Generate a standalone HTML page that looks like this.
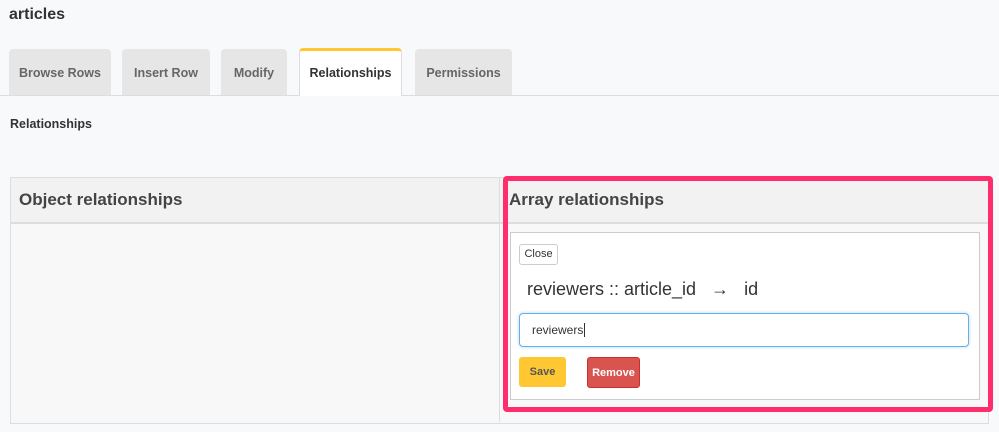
<!DOCTYPE html>
<html><head><style>
body{margin:0;width:999px;height:432px;background:#f8f9fb;font-family:"Liberation Sans",sans-serif;position:relative;overflow:hidden;color:#444}
.a{position:absolute}
.tab{position:absolute;top:49px;height:46px;background:#e6e6e6;border-radius:4px 4px 0 0;font-size:12.5px;font-weight:bold;color:#666;text-align:center;line-height:48px}
</style></head><body>
<div class="a" style="left:9px;top:6px;font-size:16px;font-weight:bold;color:#333">articles</div>
<div class="a" style="left:0;top:95px;width:999px;height:1px;background:#ddd"></div>
<div class="tab" style="left:9px;width:102px">Browse Rows</div>
<div class="tab" style="left:122px;width:88px">Insert Row</div>
<div class="tab" style="left:221px;width:66px">Modify</div>
<div class="tab" style="left:299px;width:103px;height:46px;background:#fff;border:1px solid #ddd;border-bottom:none;border-top:3px solid #ffc832;top:48px;color:#333;line-height:44px;box-sizing:border-box;height:48px">Relationships</div>
<div class="tab" style="left:415px;width:97px">Permissions</div>
<div class="a" style="left:10px;top:117px;font-size:12.5px;font-weight:bold;color:#333">Relationships</div>
<div class="a" style="left:10px;top:177px;width:977px;height:245px;border:1px solid #ddd;background:#f8f8f8"></div>
<div class="a" style="left:11px;top:178px;width:977px;height:44px;background:#f2f2f2;border-bottom:2px solid #ddd"></div>
<div class="a" style="left:499px;top:178px;width:1px;height:244px;background:#ddd"></div>
<div class="a" style="left:19px;top:190px;font-size:17px;font-weight:bold;color:#444">Object relationships</div>
<div class="a" style="left:509px;top:190px;font-size:17px;font-weight:bold;color:#444">Array relationships</div>
<div class="a" style="left:510px;top:232px;width:468px;height:166px;background:#fff;border:1px solid #ccc"></div>
<div class="a" style="left:519px;top:244px;width:37px;height:19px;border:1px solid #ccc;border-radius:3px;background:#fff;font-size:11px;line-height:19px;text-align:center;color:#333">Close</div>
<div class="a" style="left:527px;top:279px;font-size:18px;color:#333;word-spacing:0">reviewers :: article_id &nbsp;&nbsp;→ &nbsp;&nbsp;id</div>
<div class="a" style="left:519px;top:313px;width:448px;height:32px;border:1px solid #66afe9;border-radius:4px;background:#fff;box-shadow:0 0 3px rgba(102,175,233,.5)"><span style="position:absolute;left:12px;top:9px;font-size:12px;color:#333">reviewers<span style="border-left:1px solid #333;margin-left:1px"></span></span></div>
<div class="a" style="left:519px;top:357px;width:47px;height:30px;background:#ffc832;border-radius:3px;font-size:11px;font-weight:bold;color:#555;text-align:center;line-height:30px">Save</div>
<div class="a" style="left:587px;top:357px;width:51px;height:29px;background:#d9534f;border:1px solid #c9302c;border-radius:3px;font-size:11px;font-weight:bold;color:#fff;text-align:center;line-height:30px">Remove</div>
<div class="a" style="left:503px;top:176px;width:480px;height:226px;border:5px solid #ff2d6b;border-radius:4px"></div>
</body></html>
